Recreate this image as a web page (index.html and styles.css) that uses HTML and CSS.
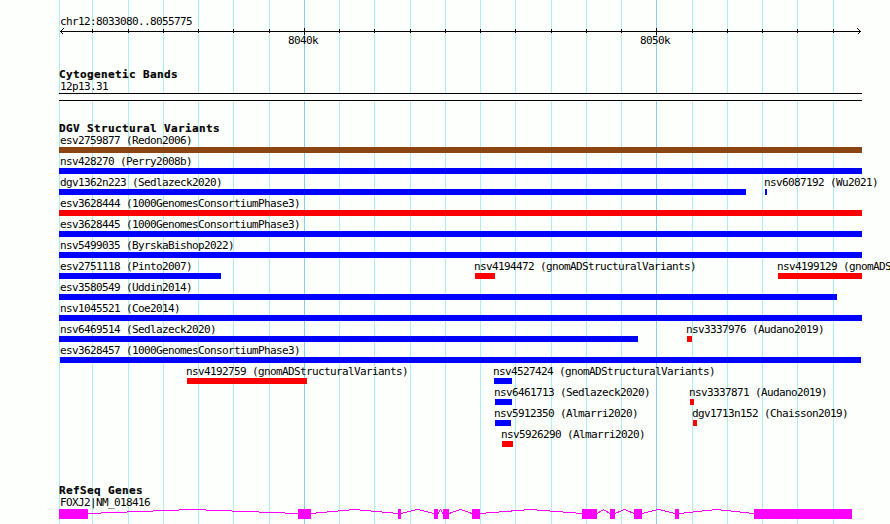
FILE: index.html
```html
<!DOCTYPE html>
<html lang="en">
<head>
<meta charset="utf-8">
<title>chr12:8033080..8055775</title>
<link rel="stylesheet" href="styles.css">
</head>
<body>
<main class="browser">
  <svg class="gridlines" width="890" height="524" shape-rendering="crispEdges" aria-hidden="true">
    <path class="minor" d="M59.5 0V524M92.5 0V524M128.5 0V524M163.5 0V524M198.5 0V524M233.5 0V524M269.5 0V524M339.5 0V524M374.5 0V524M410.5 0V524M445.5 0V524M480.5 0V524M515.5 0V524M551.5 0V524M586.5 0V524M621.5 0V524M692.5 0V524M727.5 0V524M762.5 0V524M797.5 0V524M833.5 0V524"/>
    <path class="major" d="M304.5 0V524M656.5 0V524"/>
  </svg>

  <header class="scale">
    <div class="region">chr12:8033080..8055775</div>
    <svg class="ruler" width="890" height="8" shape-rendering="crispEdges" aria-hidden="true">
      <path d="M60 3.5H861M92.5 1V5M128.5 1V5M163.5 1V5M198.5 1V5M233.5 1V5M269.5 1V5M304.5 0V7M339.5 1V5M374.5 1V5M410.5 1V5M445.5 1V5M480.5 1V5M515.5 1V5M551.5 1V5M586.5 1V5M621.5 1V5M656.5 0V7M692.5 1V5M727.5 1V5M762.5 1V5M797.5 1V5M833.5 1V5"/>
      <path d="M63.5 .5L60.5 3.5L63.5 6.5M857.5 .5L860.5 3.5L857.5 6.5"/>
    </svg>
    <div class="ticks"><span>8040k</span><span>8050k</span></div>
  </header>

  <section class="track bands">
    <h2>Cytogenetic Bands</h2>
    <div class="name">12p13.31</div>
    <div class="band"></div>
  </section>

  <section class="track variants">
    <h2>DGV Structural Variants</h2>
    <div class="row"><div class="feature edge brown" style="--x:59px;--w:803px"><span>esv2759877 (Redon2006)</span></div></div>
    <div class="row"><div class="feature edge blue" style="--x:59px;--w:803px"><span>nsv428270 (Perry2008b)</span></div></div>
    <div class="row"><div class="feature edge blue" style="--x:59px;--w:687px"><span>dgv1362n223 (Sedlazeck2020)</span></div><div class="feature blue" style="--x:765px;--w:2px"><span>nsv6087192 (Wu2021)</span></div></div>
    <div class="row"><div class="feature edge red" style="--x:59px;--w:803px"><span>esv3628444 (1000GenomesConsortiumPhase3)</span></div></div>
    <div class="row"><div class="feature edge blue" style="--x:59px;--w:803px"><span>esv3628445 (1000GenomesConsortiumPhase3)</span></div></div>
    <div class="row"><div class="feature edge blue" style="--x:59px;--w:803px"><span>nsv5499035 (ByrskaBishop2022)</span></div></div>
    <div class="row"><div class="feature edge blue" style="--x:59px;--w:162px"><span>esv2751118 (Pinto2007)</span></div><div class="feature red" style="--x:475px;--w:20px"><span>nsv4194472 (gnomADStructuralVariants)</span></div><div class="feature red" style="--x:778px;--w:84px"><span>nsv4199129 (gnomADStructuralVariants)</span></div></div>
    <div class="row"><div class="feature edge blue" style="--x:59px;--w:778px"><span>esv3580549 (Uddin2014)</span></div></div>
    <div class="row"><div class="feature edge blue" style="--x:59px;--w:803px"><span>nsv1045521 (Coe2014)</span></div></div>
    <div class="row"><div class="feature edge blue" style="--x:59px;--w:579px"><span>nsv6469514 (Sedlazeck2020)</span></div><div class="feature red" style="--x:687px;--w:5px"><span>nsv3337976 (Audano2019)</span></div></div>
    <div class="row"><div class="feature flush blue" style="--x:60px;--w:801px"><span>esv3628457 (1000GenomesConsortiumPhase3)</span></div></div>
    <div class="row"><div class="feature red" style="--x:187px;--w:120px"><span>nsv4192759 (gnomADStructuralVariants)</span></div><div class="feature blue" style="--x:494px;--w:18px"><span>nsv4527424 (gnomADStructuralVariants)</span></div></div>
    <div class="row"><div class="feature blue" style="--x:495px;--w:17px"><span>nsv6461713 (Sedlazeck2020)</span></div><div class="feature red" style="--x:690px;--w:4px"><span>nsv3337871 (Audano2019)</span></div></div>
    <div class="row"><div class="feature blue" style="--x:495px;--w:16px"><span>nsv5912350 (Almarri2020)</span></div><div class="feature red" style="--x:693px;--w:4px"><span>dgv1713n152 (Chaisson2019)</span></div></div>
    <div class="row"><div class="feature red" style="--x:502px;--w:11px"><span>nsv5926290 (Almarri2020)</span></div></div>
  </section>

  <section class="track genes">
    <h2>RefSeq Genes</h2>
    <div class="name">FOXJ2|NM_018416</div>
    <svg class="gene" width="890" height="10" shape-rendering="crispEdges" aria-hidden="true">
      <path class="intron" d="M88 4.5L192.500 .5L298 4.5M311 4.5L354.500 .5L398 4.5M401 4.5L417.500 .5L434 4.5M438 4.5L440.500 .5L443 4.5M449 4.5L460.500 .5L472 4.5M480 4.5L530.500 .5L582 4.5M597 4.5L603.500 .5L610 4.5M615 4.5L624.500 .5L634 4.5M642 4.5L658.500 .5L675 4.5M679 4.5L716.500 .5L754 4.5"/>
      <path class="exon" d="M59 0h29v10h-29zM298 0h13v10h-13zM398 0h3v10h-3zM434 0h4v10h-4zM443 0h6v10h-6zM472 0h8v10h-8zM582 0h15v10h-15zM610 0h5v10h-5zM634 0h8v10h-8zM675 0h4v10h-4zM754 0h98v10h-98z"/>
    </svg>
  </section>
</main>
</body>
</html>
```
FILE: styles.css
```css
body {
  margin: 0;
  background: #fdfffc;
  color: #000;
  font-family: "DejaVu Sans Mono", "Liberation Mono", monospace;
  font-size: 11px;
  line-height: 12px;
  letter-spacing: -0.622px;
  white-space: nowrap;
}

.browser {
  position: relative;
  width: 890px;
  height: 524px;
  overflow: hidden;
  display: flow-root;
}

.gridlines {
  position: absolute;
  top: 0;
  left: 0;
  z-index: -1;
}
.minor { stroke: #afeeee; }
.major { stroke: #87ceeb; }

svg { display: block; }

.scale {
  box-sizing: border-box;
  height: 69px;
  padding-top: 16px;
}
.region, .name { padding-left: 60px; }
.ruler { fill: none; stroke: #000; }
.ticks {
  display: flex;
  gap: 322px;
  margin-top: -1px;
  padding-left: 288px;
}
.ticks span { width: 30px; }

h2 {
  margin: 0;
  padding-left: 59px;
  font-size: 11px;
  line-height: 12px;
  letter-spacing: 0.378px;
  -webkit-text-stroke: 0.2px #000;
}

.bands { height: 54px; }
.band {
  box-sizing: border-box;
  width: 803px;
  height: 8px;
  margin-left: 59px;
  border: solid #000;
  border-width: 1px 0;
  background: #fdfffc;
}

.variants { height: 362px; }
.row {
  display: grid;
  height: 21px;
}
.feature {
  grid-area: 1 / 1;
  width: var(--w);
  height: 6px;
  margin: 12px 0 0 var(--x);
  background: var(--c);
}
.feature span {
  display: block;
  margin: -12px 0 0 -1px;
}
.edge span { margin-left: 1px; }
.flush span { margin-left: 0; }
.blue { --c: #00f; }
.red { --c: #f00; }
.brown { --c: #8b4513; }

.intron { fill: none; stroke: #f0f; }
.exon { fill: #f0f; }
```
